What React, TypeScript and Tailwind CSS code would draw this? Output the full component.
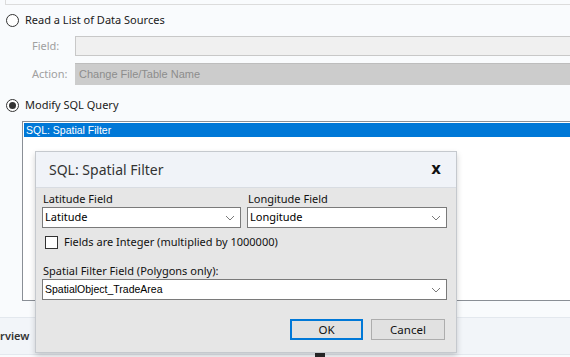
import React from 'react'

const ui = { fontFamily: '"Noto Sans", "Open Sans", sans-serif' }
const ms = { fontFamily: '"Liberation Sans", Arial, sans-serif' }

function Radio({ checked, label }: { checked?: boolean; label: string }) {
  return (
    <div className="flex items-center h-[18px] pl-[6px]">
      <span className="w-[13px] h-[13px] rounded-full border border-[#333] bg-white flex items-center justify-center">
        {checked && <span className="w-[7px] h-[7px] rounded-full bg-[#333]" />}
      </span>
      <span className="ml-[6px] text-[11px] text-[#1a1a1a]" style={ui}>
        {label}
      </span>
    </div>
  )
}

function Chevron() {
  return (
    <svg width="10" height="6" viewBox="0 0 10 6" className="shrink-0">
      <path d="M1 1 L5 5 L9 1" fill="none" stroke="#7a7a7a" strokeWidth="1" />
    </svg>
  )
}

function Select({ value, className, mono }: { value: string; className?: string; mono?: boolean }) {
  return (
    <div
      className={`h-[21px] bg-white border border-[#7a7a7a] flex items-center justify-between pl-[2px] pr-[5px] ${className ?? ''}`}
    >
      <span className={mono ? 'text-[10.5px] text-black' : 'text-[11px] text-black'} style={mono ? ms : ui}>
        {value}
      </span>
      <Chevron />
    </div>
  )
}

export default function App() {
  return (
    <div className="relative w-[570px] h-[357px] overflow-hidden bg-[#f9fbfd]">
      {/* tail of box above */}
      <div className="ml-[5px] h-[5px] border-l border-b border-[#dcdcdc]" />

      <div className="mt-[6px]">
        <Radio label="Read a List of Data Sources" />
      </div>

      {/* Field */}
      <div className="flex items-center mt-[7px] h-[20px]">
        <span className="w-[75px] pl-[32px] text-[11px] text-[#a0a0a0]" style={ui}>
          Field:
        </span>
        <div className="flex-1 h-[20px] border-y border-l border-[#c8c8c8] bg-[#f0f0f0]" />
      </div>

      {/* Action */}
      <div className="flex items-center mt-[7px] h-[22px]">
        <span className="w-[75px] pl-[32px] text-[11px] text-[#a0a0a0]" style={ui}>
          Action:
        </span>
        <div className="flex-1 h-[22px] bg-[#cccccc] border-t border-[#bdbdbd] flex items-center pl-[4px]">
          <span className="text-[11px] text-[#8c8c8c]" style={ms}>
            Change File/Table Name
          </span>
        </div>
      </div>

      <div className="mt-[11px]">
        <Radio checked label="Modify SQL Query" />
      </div>

      {/* list box */}
      <div className="ml-[22px] mt-[7px] h-[180px] border-l border-t border-b border-[#8a8f96] bg-white pt-[1px] pl-[1px]">
        <div className="h-[14px] bg-[#0078d7] flex items-center pl-[2px]">
          <span className="text-[10.5px] text-white leading-none" style={ms}>
            SQL: Spatial Filter
          </span>
        </div>
      </div>

      {/* tab band */}
      <div className="mt-[16px] h-[38px] border-t border-b border-[#e3e8ee] bg-[#f2f5f9] flex items-center">
        <span className="-ml-[21px] text-[11px] font-semibold text-[#333]" style={ui}>
          Overview
        </span>
      </div>
      <div className="absolute left-[315px] top-[352px] w-[10px] h-[6px] bg-[#2b2b2b]" />

      {/* dialog */}
      <div
        className="absolute left-[35px] top-[151px] w-[422px] h-[202px] border border-[#c5c9ce] bg-[#e6e6e6] shadow-[0_3px_6px_rgba(0,0,0,0.18)] flex flex-col"
        style={ui}
      >
        <div className="h-[36px] bg-[#f0f3f8] border-b border-[#d8dce2] flex items-center">
          <span className="ml-[13px] text-[14px] text-[#333]">SQL: Spatial Filter</span>
          <span
            className="ml-auto mr-[15px] text-[15px] font-bold text-[#111] leading-none"
            style={{ fontFamily: '"DejaVu Sans", sans-serif' }}
          >
            x
          </span>
        </div>

        <div className="px-[6px] pt-[2px]">
          <div className="flex gap-[6px]">
            <div className="w-[199px]">
              <div className="text-[11px] text-[#111] pl-[1px] leading-[17px]">Latitude Field</div>
              <Select value="Latitude" />
            </div>
            <div className="w-[200px]">
              <div className="text-[11px] text-[#111] pl-[1px] leading-[17px]">Longitude Field</div>
              <Select value="Longitude" />
            </div>
          </div>

          <div className="flex items-center mt-[7px] pl-[3px] h-[14px]">
            <span className="w-[13px] h-[13px] border border-[#333] bg-white" />
            <span className="ml-[6px] text-[11px] text-[#111]">Fields are Integer (multiplied by 1000000)</span>
          </div>

          <div className="mt-[13px] text-[11px] text-[#111] pl-[1px] leading-[17px]">
            Spatial Filter Field (Polygons only):
          </div>
          <Select value="SpatialObject_TradeArea" className="w-[405px]" mono />

          <div className="flex justify-end gap-[8px] mt-[19px] pr-[5px]">
            <button className="w-[73px] h-[21px] bg-[#e1e1e1] border-2 border-[#0078d7] text-[11.5px] text-[#111]">
              OK
            </button>
            <button className="w-[74px] h-[21px] bg-[#e1e1e1] border border-[#adadad] text-[11.5px] text-[#111]">
              Cancel
            </button>
          </div>
        </div>
      </div>
    </div>
  )
}
